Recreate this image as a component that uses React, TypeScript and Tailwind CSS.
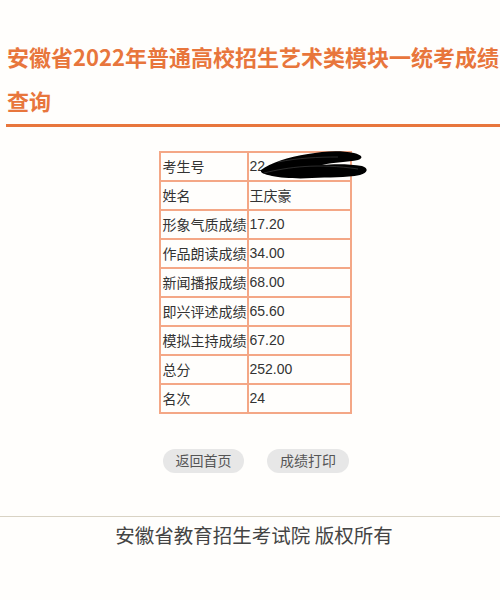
const rows: [string, string][] = [
  ['考生号', '22'],
  ['姓名', '王庆豪'],
  ['形象气质成绩', '17.20'],
  ['作品朗读成绩', '34.00'],
  ['新闻播报成绩', '68.00'],
  ['即兴评述成绩', '65.60'],
  ['模拟主持成绩', '67.20'],
  ['总分', '252.00'],
  ['名次', '24'],
]

function Scribble() {
  return (
    <svg
      className="pointer-events-none absolute left-[9px] top-[-6px]"
      width="112"
      height="34"
      viewBox="0 0 112 34"
      aria-hidden="true"
    >
      <path
        d="M3 23 C12 16 30 10 50 7 C66 4 82 3 96 6 C104 8 106 11 100 13 C90 15 76 15 64 18 C76 17 92 17 104 19 C111 21 110 26 102 28 C88 31 70 30 54 31 C40 32 24 31 14 29 C6 27 2 26 3 23 Z"
        fill="#000"
      />
      <path d="M6 26 C30 20 60 16 100 22" stroke="#555" strokeWidth="1" fill="none" opacity="0.5" />
      <path d="M20 15 C40 11 60 10 80 10" stroke="#555" strokeWidth="1" fill="none" opacity="0.5" />
    </svg>
  )
}

export default function App() {
  return (
    <div className="min-h-[600px] w-[500px] bg-[#fffefc] font-['Noto_Sans_CJK_SC','Noto_Sans',sans-serif]">
      <div className="pl-[7px] pt-[34px]">
        <h1 className="text-[22px] font-bold leading-[44px] text-[#e8763c]">
          安徽省2022年普通高校招生艺术类模块一统考成绩查询
        </h1>
      </div>
      <div className="ml-[6px] mt-[2px] h-[2.5px] bg-[#e8763c]" />

      <div className="mt-[24px] flex justify-center">
        <table className="ml-[10px] border-collapse border-2 border-[#f4a786] text-[14px] text-[#333]">
          <tbody>
            {rows.map(([k, v], i) => (
              <tr key={k} className="h-[29px]">
                <td className="w-[84px] border-2 border-[#f4a786] pl-[2px] leading-none whitespace-nowrap">{k}</td>
                <td className="relative w-[103px] border-2 border-[#f4a786] pl-px font-['Liberation_Sans','Noto_Sans_CJK_SC',sans-serif] leading-none">
                  <span className={/^\d/.test(v) ? '' : "font-['Noto_Sans_CJK_SC',sans-serif]"}>{v}</span>
                  {i === 0 && <Scribble />}
                </td>
              </tr>
            ))}
          </tbody>
        </table>
      </div>

      <div className="mt-[35px] flex justify-center gap-[23px] pl-[12px]">
        <button type="button" className="h-[24px] w-[81px] rounded-full bg-[#e7e7e7] text-[14px] text-[#555]">
          返回首页
        </button>
        <button type="button" className="h-[24px] w-[82px] rounded-full bg-[#e7e7e7] text-[14px] text-[#555]">
          成绩打印
        </button>
      </div>

      <div className="mt-[43px] h-px bg-[#d9d3c4]" />
      <p className="mt-[3px] pl-[8px] text-center text-[19.5px] text-[#444]">安徽省教育招生考试院 版权所有</p>
    </div>
  )
}
